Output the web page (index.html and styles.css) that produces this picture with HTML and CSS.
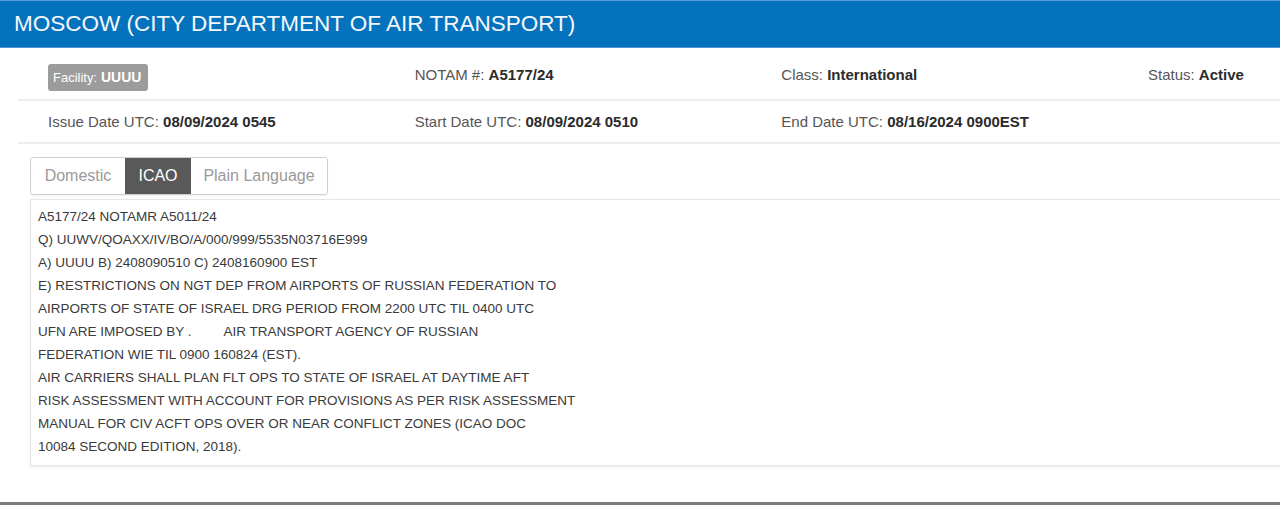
FILE: index.html
```html
<!DOCTYPE html>
<html>
<head>
<meta charset="utf-8">
<link rel="stylesheet" href="styles.css">
</head>
<body>
<div class="header">MOSCOW (CITY DEPARTMENT OF AIR TRANSPORT)</div>
<div class="info">
  <div class="row row1">
    <div class="col"><span class="badge"><span class="badge-label">Facility:</span> <b>UUUU</b></span></div>
    <div class="col"><span class="lbl">NOTAM #:</span> <b>A5177/24</b></div>
    <div class="col"><span class="lbl">Class:</span> <b>International</b></div>
    <div class="col"><span class="lbl">Status:</span> <b>Active</b></div>
  </div>
  <div class="row row2">
    <div class="col"><span class="lbl">Issue Date UTC:</span> <b>08/09/2024 0545</b></div>
    <div class="col"><span class="lbl">Start Date UTC:</span> <b>08/09/2024 0510</b></div>
    <div class="col"><span class="lbl">End Date UTC:</span> <b>08/16/2024 0900EST</b></div>
    <div class="col"></div>
  </div>
</div>
<div class="tabs">
  <div class="tab tab-dom">Domestic</div>
  <div class="tab tab-icao active">ICAO</div>
  <div class="tab tab-plain">Plain Language</div>
</div>
<div class="notam">
  <div>A5177/24 NOTAMR A5011/24</div>
  <div>Q) UUWV/QOAXX/IV/BO/A/000/999/5535N03716E999</div>
  <div>A) UUUU B) 2408090510 C) 2408160900 EST</div>
  <div>E) RESTRICTIONS ON NGT DEP FROM AIRPORTS OF RUSSIAN FEDERATION TO</div>
  <div>AIRPORTS OF STATE OF ISRAEL DRG PERIOD FROM 2200 UTC TIL 0400 UTC</div>
  <div>UFN ARE IMPOSED BY .<span class="gap"></span>AIR TRANSPORT AGENCY OF RUSSIAN</div>
  <div>FEDERATION WIE TIL 0900 160824 (EST).</div>
  <div>AIR CARRIERS SHALL PLAN FLT OPS TO STATE OF ISRAEL AT DAYTIME AFT</div>
  <div>RISK ASSESSMENT WITH ACCOUNT FOR PROVISIONS AS PER RISK ASSESSMENT</div>
  <div>MANUAL FOR CIV ACFT OPS OVER OR NEAR CONFLICT ZONES (ICAO DOC</div>
  <div>10084 SECOND EDITION, 2018).</div>
</div>
<div class="footer-line"></div>
</body>
</html>
```
FILE: styles.css
```css
html, body {
  margin: 0;
  padding: 0;
  background: #fff;
  overflow: hidden;
}
body {
  font-family: "Liberation Sans", Arial, sans-serif;
  color: #333;
  height: 505px;
  position: relative;
}
.header {
  height: 46px;
  line-height: 46px;
  background: #0572bd;
  border-top: 1px solid #5b9fd6;
  border-bottom: 1px solid #4d96d0;
  color: #f4f8fc;
  font-size: 22.5px;
  padding-left: 14px;
  white-space: nowrap;
}
.info {
  margin-left: 18px;
  overflow: hidden;
}
.row {
  display: flex;
  align-items: center;
  border-bottom: 2px solid #ececec;
  width: 1480px;
  font-size: 15px;
  box-sizing: border-box;
}
.row1 { height: 53px; padding-top: 2px; }
.row2 { height: 43px; }
.col {
  flex: 0 0 366.67px;
  box-sizing: border-box;
  padding-left: 30px;
  white-space: nowrap;
}
.lbl { color: #555; }
.col b { color: #2b2b2b; }
.badge {
  display: inline-block;
  background: #9c9c9c;
  color: #fff;
  border-radius: 3px;
  height: 27px;
  line-height: 27px;
  width: 100px;
  box-sizing: border-box;
  padding-left: 5px;
  margin-top: 6px;
  font-size: 14px;
}
.badge-label { font-size: 13px; }
.badge b { color: #fff; }
.tabs {
  display: flex;
  margin: 13px 0 0 30px;
  width: fit-content;
  height: 36px;
  border: 1px solid #cfcfcf;
  border-radius: 3px;
  box-shadow: 0 1px 2px rgba(0,0,0,0.06);
  white-space: nowrap;
}
.tab {
  font-size: 16px;
  line-height: 36px;
  color: #9a9a9a;
  text-align: center;
}
.tab-dom { width: 94px; }
.tab-icao { width: 66px; }
.tab-plain { width: 136px; }
.tab.active {
  background: #595959;
  color: #fff;
}
.notam {
  margin: 4px 0 0 30px;
  width: 1280px;
  box-sizing: border-box;
  height: 267px;
  border: 1px solid #e6e6e6;
  box-shadow: 0 1px 3px rgba(0,0,0,0.08);
  padding: 5px 0 0 7px;
  font-size: 13.5px;
  line-height: 23px;
  color: #3a3a3a;
  white-space: nowrap;
}
.gap {
  display: inline-block;
  width: 32px;
}
.footer-line {
  position: absolute;
  left: 0;
  right: 0;
  top: 502px;
  height: 3px;
  background: #7a7a7a;
}
```
